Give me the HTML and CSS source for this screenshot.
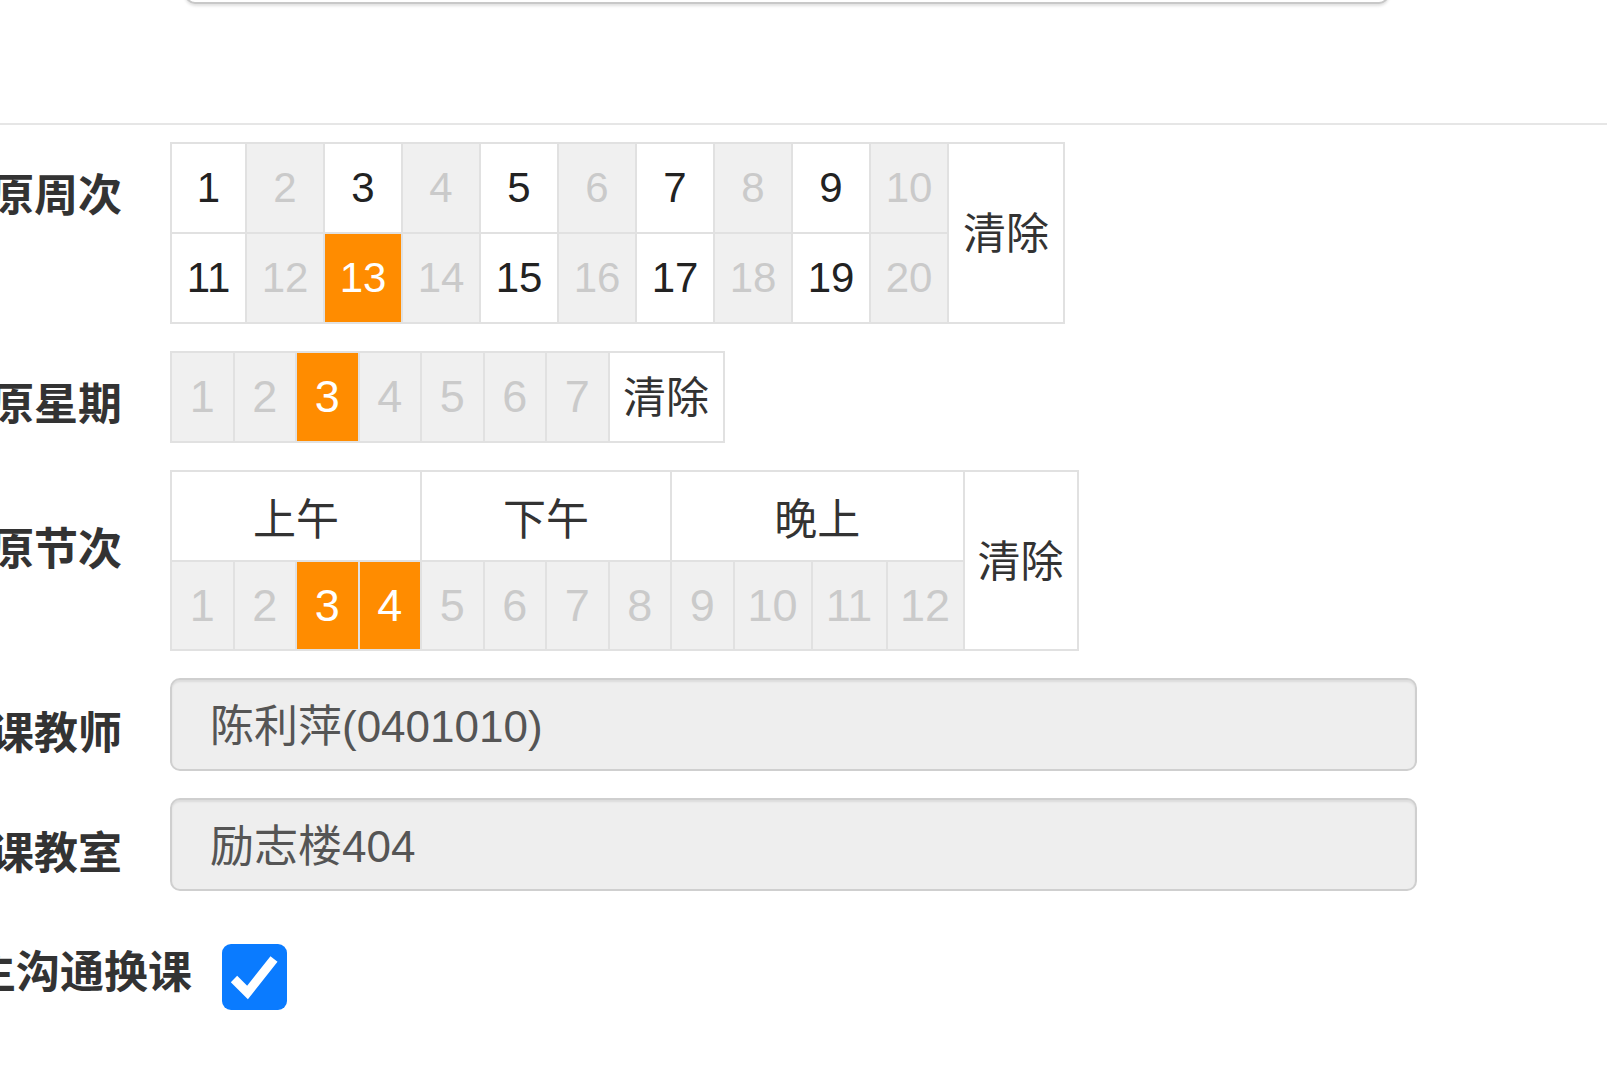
FILE: index.html
```html
<!DOCTYPE html>
<html lang="zh-CN">
<head>
<meta charset="utf-8">
<title>调课</title>
<link rel="stylesheet" href="styles.css">
</head>
<body>
<div class="top-field"></div>
<div class="divider"></div>
<div class="form">
  <div class="row">
    <div class="label label-week">原周次</div>
    <div class="grid week">
      <div class="cell on">1</div><div class="cell">2</div><div class="cell on">3</div><div class="cell">4</div><div class="cell on">5</div><div class="cell">6</div><div class="cell on">7</div><div class="cell">8</div><div class="cell on">9</div><div class="cell">10</div>
      <div class="cell clear week-clear">清除</div>
      <div class="cell on">11</div><div class="cell">12</div><div class="cell sel">13</div><div class="cell">14</div><div class="cell on">15</div><div class="cell">16</div><div class="cell on">17</div><div class="cell">18</div><div class="cell on">19</div><div class="cell">20</div>
    </div>
  </div>
  <div class="row">
    <div class="label label-day">原星期</div>
    <div class="grid day">
      <div class="cell tall">1</div><div class="cell tall">2</div><div class="cell tall sel">3</div><div class="cell tall">4</div><div class="cell tall">5</div><div class="cell tall">6</div><div class="cell tall">7</div>
      <div class="cell clear">清除</div>
    </div>
  </div>
  <div class="row">
    <div class="label label-period">原节次</div>
    <div class="grid period">
      <div class="cell head head-am">上午</div>
      <div class="cell head head-pm">下午</div>
      <div class="cell head head-eve">晚上</div>
      <div class="cell clear period-clear">清除</div>
      <div class="cell tall">1</div><div class="cell tall">2</div><div class="cell tall sel">3</div><div class="cell tall sel">4</div><div class="cell tall">5</div><div class="cell tall">6</div><div class="cell tall">7</div><div class="cell tall">8</div><div class="cell tall">9</div><div class="cell tall">10</div><div class="cell tall">11</div><div class="cell tall">12</div>
    </div>
  </div>
  <div class="row">
    <div class="label label-input">课教师</div>
    <div class="input">陈利萍(0401010)</div>
  </div>
  <div class="row">
    <div class="label label-input">课教室</div>
    <div class="input">励志楼404</div>
  </div>
  <div class="row row-check">
    <div class="label label-check">主沟通换课</div>
    <div class="checkbox">
      <svg width="65" height="66" viewBox="0 0 65 66"><path d="M12 35 L25.5 48.5 L52 15" fill="none" stroke="#fff" stroke-width="9"/></svg>
    </div>
  </div>
</div>
</body>
</html>
```
FILE: styles.css
```css
html, body {
  margin: 0;
  padding: 0;
  background: #fff;
  overflow: hidden;
}
body {
  width: 1607px;
  height: 1072px;
  font-family: "Liberation Sans", "Noto Sans CJK SC", sans-serif;
  font-size: 44px;
  color: #333;
}
.top-field {
  box-sizing: border-box;
  margin-left: 185px;
  width: 1204px;
  height: 44px;
  margin-top: -40px;
  border: 2px solid #c8c8c8;
  border-radius: 10px;
  background: #fff;
  box-shadow: 0 2px 3px rgba(0,0,0,0.12);
}
.divider {
  margin-top: 119px;
  height: 2px;
  background: #e6e6e6;
}
.form {
  margin-left: -100px;
  padding-top: 17px;
  display: flex;
  flex-direction: column;
  gap: 27px;
}
.row {
  display: flex;
  align-items: flex-start;
}
.label {
  flex: none;
  width: 222px;
  margin-right: 48px;
  text-align: right;
  white-space: nowrap;
  font-family: "Noto Sans CJK SC", sans-serif;
  font-weight: 700;
  font-size: 44px;
  line-height: 44px;
  color: #333;
}
.label-week { padding-top: 28px; }
.label-day { padding-top: 28px; }
.label-period { padding-top: 54px; }
.label-input { padding-top: 30px; }
.row-check { margin-top: 27px; }
.label-check {
  width: 292px;
  margin-right: 30px;
  padding-top: 2px;
}
.grid {
  display: grid;
  background: #e1e1e1;
  padding: 2px;
  gap: 2px;
}
.week {
  grid-template-columns: 73px repeat(9, 76px) 114px;
  grid-template-rows: 88px 88px;
}
.week-clear {
  grid-column: 11;
  grid-row: 1 / span 2;
}
.day {
  grid-template-columns: repeat(7, 60.5px) 113px;
  grid-template-rows: 88px;
}
.period {
  grid-template-columns: repeat(9, 60.5px) 76px 73px 75px 112px;
  grid-template-rows: 88px 87px;
}
.head-am { grid-column: 1 / span 4; }
.head-pm { grid-column: 5 / span 4; }
.head-eve { grid-column: 9 / span 4; }
.period-clear {
  grid-column: 13;
  grid-row: 1 / span 2;
}
.cell {
  display: flex;
  align-items: center;
  justify-content: center;
  background: #f0f0f0;
  color: #cacaca;
  font-size: 42px;
}
.cell.on {
  background: #fff;
  color: #222;
}
.cell.sel {
  background: #ff8c00;
  color: #fff;
}
.cell.tall {
  font-size: 45px;
}
.cell.clear, .cell.head {
  background: #fff;
  color: #333;
  font-family: "Noto Sans CJK SC", sans-serif;
  font-size: 43px;
}
.cell.clear {
  padding-bottom: 6px;
}
.input {
  box-sizing: border-box;
  width: 1247px;
  height: 93px;
  padding-left: 38px;
  padding-top: 4px;
  border: 2px solid #cfcfcf;
  border-radius: 10px;
  background: #eee;
  box-shadow: inset 0 2px 2px rgba(0,0,0,0.075);
  color: #555;
  font-size: 44px;
  line-height: 85px;
}
.checkbox {
  width: 65px;
  height: 66px;
  border-radius: 9px;
  background: #0a7bff;
  margin-top: -1px;
}
.checkbox svg {
  display: block;
}
```
